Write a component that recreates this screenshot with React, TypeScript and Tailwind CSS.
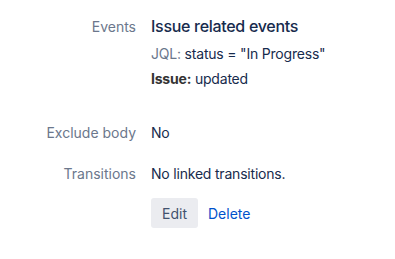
export default function App() {
  return (
    <div
      className="w-[395px] h-[259px] bg-white text-[#172B4D] pt-[16px]"
      style={{ fontFamily: "Inter, 'Noto Sans', sans-serif" }}
    >
      <div className="flex items-baseline gap-[15px]">
        <div className="w-[136px] text-right text-[14px] leading-[20px] text-[#6B778C]">Events</div>
        <div className="tracking-[-0.2px]">
          <h3 className="text-[16px] leading-[20px] font-medium tracking-[-0.3px] text-[#172B4D]">Issue related events</h3>
          <p className="mt-[8px] text-[14px] leading-[20px]">
            <span className="text-[#6B778C]">JQL:</span> status = "In Progress"
          </p>
          <p className="mt-[5px] text-[14px] leading-[20px]">
            <span className="font-bold text-[#333333]">Issue:</span> updated
          </p>
        </div>
      </div>

      <div className="mt-[34px] flex items-baseline gap-[15px] text-[14px] leading-[20px]">
        <div className="w-[136px] text-right text-[#6B778C]">Exclude body</div>
        <div className="tracking-[-0.2px]">No</div>
      </div>

      <div className="mt-[21px] flex items-baseline gap-[15px] text-[14px] leading-[20px]">
        <div className="w-[136px] text-right text-[#6B778C]">Transitions</div>
        <div className="tracking-[-0.2px]">No linked transitions.</div>
      </div>

      <div className="mt-[14px] flex items-center gap-[10px] pl-[151px] text-[14px]">
        <button className="h-[30px] w-[47px] rounded-[3px] bg-[#EBECF0] text-[#42526E]">Edit</button>
        <button className="text-[#0052CC]">Delete</button>
      </div>
    </div>
  );
}
